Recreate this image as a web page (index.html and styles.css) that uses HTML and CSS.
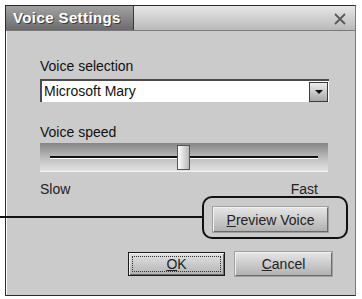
FILE: index.html
```html
<!DOCTYPE html>
<html lang="en">
<head>
  <meta charset="UTF-8" />
  <title>Voice Settings</title>
  <link rel="stylesheet" href="styles.css">
</head>
<body>
  <div class="window">
    <div class="titlebar">
      <div class="title-tab">Voice Settings</div>
      <div class="title-rest">
        <svg class="close" width="12" height="12" viewBox="0 0 12 12">
          <path d="M1 1 L11 11 M11 1 L1 11" stroke="#5a5a5a" stroke-width="1.8" fill="none"/>
        </svg>
      </div>
    </div>

    <div class="content">
      <div class="label">Voice selection</div>
      <div class="select">
        <span class="select-text">Microsoft Mary</span>
        <span class="select-btn"><span class="arrow"></span></span>
      </div>

      <div class="label speed-label">Voice speed</div>
      <div class="slider">
        <div class="track"></div>
        <div class="thumb"></div>
      </div>
      <div class="ticks">
        <span>Slow</span>
        <span>Fast</span>
      </div>

      <div class="row-preview">
        <button class="btn btn-preview"><u>P</u>review Voice</button>
      </div>

      <div class="row-actions">
        <button class="btn btn-default"><span class="focus"><u>O</u>K</span></button>
        <button class="btn btn-cancel"><u>C</u>ancel</button>
      </div>
    </div>
  </div>

  <!-- callout around the preview button -->
  <div class="callout-line"></div>
  <div class="callout"></div>
</body>
</html>
```

FILE: styles.css
```css
body {
  margin: 0;
  background-color: #ffffff;
  font-family: "Liberation Sans", Arial, sans-serif;
  font-size: 14px;
  color: #111;
  position: relative;
  width: 362px;
  height: 299px;
  overflow: hidden;
}
.window {
  margin: 5px 0 0 5px;
  width: 349px;
  height: 289px;
  border: 1px solid #2a2a2a;
  border-right-color: #7a7a7a;
  background-color: #cbcbcb;
  box-shadow: inset 1px 0 0 #ffffff;
}
.titlebar {
  display: flex;
  height: 24px;
  border-bottom: 1px solid #7a7a7a;
}
.title-tab {
  width: 120px;
  padding-left: 7px;
  background: linear-gradient(#a2a2a2, #6c6c6c);
  border-right: 1px solid #3a3a3a;
  color: #ffffff;
  font-weight: bold;
  font-size: 15px;
  line-height: 24px;
  text-shadow: 1px 1px 0 #3c3c3c;
  letter-spacing: 0.4px;
}
.title-rest {
  flex: 1;
  display: flex;
  justify-content: flex-end;
  align-items: center;
  padding-right: 9px;
  background: linear-gradient(#e6e6e6, #b9b9b9);
}
.close {
  display: block;
  margin-top: 2px;
}
.content {
  padding: 27px 22px 0 34px;
}
.label {
  line-height: 16px;
  margin-bottom: 5px;
}
.speed-label {
  margin-top: 22px;
  margin-bottom: 3px;
}
.select {
  display: flex;
  align-items: center;
  height: 23px;
  background-color: #ffffff;
  border-top: 2px solid #4a4a4a;
  border-left: 2px solid #4a4a4a;
  box-sizing: border-box;
  width: 289px;
}
.select-text {
  flex: 1;
  padding-left: 2px;
  line-height: 19px;
}
.select-btn {
  width: 19px;
  height: 20px;
  margin-right: 1px;
  border: 1px solid #3a3a3a;
  box-sizing: border-box;
  background: linear-gradient(#ececec, #a8a8a8);
  display: flex;
  align-items: center;
  justify-content: center;
}
.arrow {
  width: 0;
  height: 0;
  border-left: 4px solid transparent;
  border-right: 4px solid transparent;
  border-top: 4px solid #111;
}
.slider {
  position: relative;
  width: 288px;
  height: 29px;
  background: linear-gradient(#858585, #c4c4c4 60%, #e2e2e2);
  border-bottom: 1px solid #f4f4f4;
  box-sizing: border-box;
}
.track {
  position: absolute;
  left: 10px;
  right: 10px;
  top: 13px;
  height: 2px;
  background-color: #111;
  border-bottom: 1px solid #ffffff;
}
.thumb {
  position: absolute;
  left: 137px;
  top: 2px;
  width: 13px;
  height: 25px;
  box-sizing: border-box;
  border: 1px solid #555;
  background: linear-gradient(90deg, #ffffff, #b8b8b8);
}
.ticks {
  display: flex;
  justify-content: space-between;
  width: 278px;
  margin-top: 9px;
  line-height: 16px;
  color: #222;
}
.row-preview {
  display: flex;
  justify-content: flex-end;
  width: 288px;
  margin-top: 10px;
}
.row-actions {
  display: flex;
  justify-content: flex-end;
  gap: 10px;
  width: 292px;
  margin-top: 20px;
}
.btn {
  font-family: "Liberation Sans", Arial, sans-serif;
  font-size: 14px;
  color: #222;
  background: linear-gradient(#e4e4e4, #b2b2b2);
  border: 1px solid;
  border-color: #f2f2f2 #6a6a6a #6a6a6a #f2f2f2;
  box-shadow: 0 0 0 1px #a0a0a0;
  padding: 0;
  cursor: pointer;
}
.btn-preview {
  width: 115px;
  height: 25px;
}
.btn-default {
  width: 97px;
  height: 24px;
  border: 1px solid #1a1a1a;
  box-shadow: inset 1px 1px 0 #f0f0f0, inset -1px -1px 0 #6a6a6a;
  padding: 3px;
}
.focus {
  display: block;
  height: 100%;
  border: 1px dotted #333;
  box-sizing: border-box;
  line-height: 14px;
}
.btn-cancel {
  width: 97px;
  height: 24px;
}
.callout-line {
  position: absolute;
  left: 0;
  top: 216px;
  width: 203px;
  height: 2px;
  background-color: #111;
}
.callout {
  position: absolute;
  left: 202px;
  top: 196px;
  width: 146px;
  height: 43px;
  box-sizing: border-box;
  border: 2px solid #111;
  border-radius: 10px;
}
```
